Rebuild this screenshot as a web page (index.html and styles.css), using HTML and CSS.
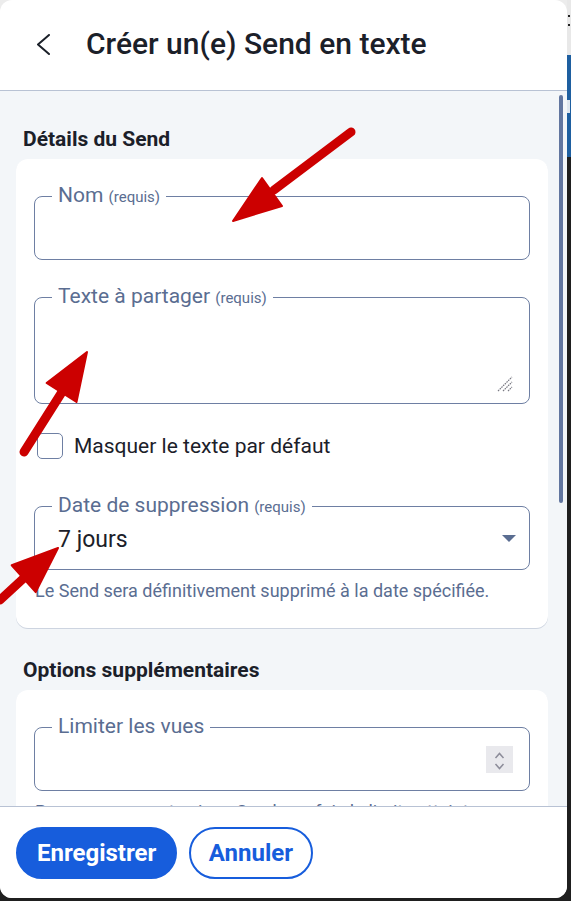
FILE: index.html
```html
<!DOCTYPE html>
<html lang="fr">
<head>
<meta charset="utf-8">
<title>Créer un(e) Send en texte</title>
<link rel="stylesheet" href="styles.css">
</head>
<body>
<div class="desktop">
  <div class="window">
    <header class="topbar">
      <svg class="back" viewBox="0 0 14 22" aria-hidden="true"><polyline points="13,1 2,10.5 13,20"/></svg>
      <h1 class="title">Créer un(e) Send en texte</h1>
    </header>
    <main class="content">
      <h2 class="section-title">Détails du Send</h2>
      <section class="card">
        <div class="field field-nom">
          <span class="label">Nom <span class="req">(requis)</span></span>
        </div>
        <div class="field field-text">
          <span class="label">Texte à partager <span class="req">(requis)</span></span>
          <svg class="resize" viewBox="0 0 16 16" aria-hidden="true">
            <line x1="1" y1="15" x2="15" y2="1"/>
            <line x1="6" y1="15" x2="15" y2="6"/>
            <line x1="11" y1="15" x2="15" y2="11"/>
          </svg>
        </div>
        <label class="check-row"><span class="checkbox"></span><span>Masquer le texte par défaut</span></label>
        <div class="field field-select">
          <span class="label">Date de suppression <span class="req">(requis)</span></span>
          <span class="value">7 jours</span>
          <span class="caret"></span>
        </div>
        <p class="hint">Le Send sera définitivement supprimé à la date spécifiée.</p>
      </section>
      <h2 class="section-title">Options supplémentaires</h2>
      <section class="card">
        <div class="field field-number">
          <span class="label">Limiter les vues</span>
          <span class="spin">
            <svg viewBox="0 0 27 27" aria-hidden="true">
              <polyline points="9.5,12 13.5,7.5 17.5,12"/>
              <polyline points="9.5,18 13.5,22.5 17.5,18"/>
            </svg>
          </span>
        </div>
        <p class="hint">Personne ne peut voir ce Send une fois la limite atteinte.</p>
      </section>
      <div class="scrollbar"></div>
    </main>
    <footer class="actions">
      <button class="btn btn-primary">Enregistrer</button>
      <button class="btn btn-outline">Annuler</button>
    </footer>
  </div>
  <div class="strip">
    <div class="strip-top"><div class="dots"></div></div>
    <div class="strip-blue"><div class="mark"></div></div>
    <div class="strip-dark"></div>
  </div>
  <svg class="annotations" viewBox="0 0 571 901" aria-hidden="true">
    <g class="arrow">
      <line x1="351" y1="132" x2="274" y2="190"/>
      <polygon points="233,221 262,178 282,206"/>
    </g>
    <g class="arrow">
      <line x1="24" y1="452" x2="62" y2="392"/>
      <polygon points="87,352 46.6,383 76.5,402"/>
    </g>
    <g class="arrow">
      <line x1="0" y1="600" x2="25" y2="577"/>
      <polygon points="58,548 11.7,565.3 35.7,592.1"/>
    </g>
  </svg>
</div>
</body>
</html>
```
FILE: styles.css
```css
* { box-sizing: border-box; }

body {
  margin: 0;
  background: #1f1f1f;
  font-family: Roboto, "Noto Sans", "Liberation Sans", sans-serif;
}

.desktop {
  position: relative;
  width: 571px;
  height: 901px;
  display: flex;
  align-items: flex-start;
  overflow: hidden;
  background: linear-gradient(#ececec 0 60px, #1f1f1f 60px);
}

.window {
  flex: none;
  width: 567px;
  height: 898px;
  background: #fff;
  border-radius: 12px;
  display: flex;
  flex-direction: column;
  overflow: hidden;
}

.topbar {
  flex: none;
  height: 91px;
  display: flex;
  align-items: center;
  border-bottom: 1px solid #b8c2d4;
  padding-bottom: 3px;
}

.back {
  width: 14px;
  height: 22px;
  margin: 2px 36px 0;
  fill: none;
  stroke: #1b2029;
  stroke-width: 2;
  stroke-linecap: round;
  stroke-linejoin: round;
}

.title {
  margin: 0;
  font-size: 30px;
  font-weight: 500;
  line-height: 34px;
  color: #1b2029;
  white-space: nowrap;
}

.content {
  flex: 1;
  position: relative;
  overflow: hidden;
  background: #f3f6f9;
  padding: 36px 19px 0 16px;
}

.section-title {
  margin: 0 0 8px 7px;
  font-size: 21px;
  font-weight: 700;
  line-height: 24px;
  color: #1b2029;
}

.card {
  background: #fff;
  border-radius: 12px;
  padding: 37px 18px 27px 18px;
  box-shadow: 0 1px 0 #cdd4e0;
  margin-bottom: 30px;
}

.field {
  position: relative;
  height: 64px;
  border: 1.5px solid #6e7fa3;
  border-radius: 8px;
}

.label {
  position: absolute;
  top: -14px;
  left: 17px;
  padding: 0 6px;
  background: #fff;
  font-size: 21px;
  line-height: 24px;
  color: #5a6d91;
  white-space: nowrap;
}

.req { font-size: 15px; }

.field-nom { margin-bottom: 37px; }

.field-text {
  height: 107px;
  margin-bottom: 29px;
  display: flex;
  justify-content: flex-end;
  align-items: flex-end;
  padding: 0 16px 11px 0;
}

.resize {
  width: 16px;
  height: 16px;
  stroke: #7a7a84;
  stroke-width: 1.2;
  stroke-dasharray: 1.6 0.8;
}

.check-row {
  display: flex;
  align-items: center;
  gap: 11px;
  height: 26px;
  margin: 0 0 47px 3px;
  font-size: 21px;
  color: #1b2029;
}

.checkbox {
  flex: none;
  width: 26px;
  height: 26px;
  border: 1.5px solid #6e7fa3;
  border-radius: 5px;
  background: #fff;
}

.field-select {
  display: flex;
  align-items: center;
  justify-content: space-between;
  padding: 0 13px 0 23px;
}

.value {
  font-size: 23px;
  color: #1b2029;
  padding-top: 2px;
}

.caret {
  width: 0;
  height: 0;
  border-left: 7px solid transparent;
  border-right: 7px solid transparent;
  border-top: 7px solid #5a6d91;
}

.hint {
  margin: 11px 0 0 1px;
  font-size: 18px;
  line-height: 20px;
  color: #5a6d91;
  white-space: nowrap;
}

.field-number {
  display: flex;
  justify-content: flex-end;
  align-items: center;
  padding-right: 16px;
}

.spin {
  width: 27px;
  height: 27px;
  background: #e9e9ed;
  display: flex;
}

.spin svg {
  width: 27px;
  height: 27px;
  fill: none;
  stroke: #8c8c99;
  stroke-width: 1.5;
}

.scrollbar {
  position: absolute;
  top: 4px;
  right: 4px;
  width: 4px;
  height: 408px;
  border-radius: 2px;
  background: #6276a0;
}

.actions {
  flex: none;
  height: 92px;
  border-top: 1px solid #b8c2d4;
  background: #fff;
  display: flex;
  gap: 12px;
  padding: 20px 16px 0;
}

.btn {
  height: 52px;
  border-radius: 26px;
  border: 2px solid #175ddc;
  font-family: Roboto, "Noto Sans", sans-serif;
  font-size: 24px;
  font-weight: 700;
  line-height: 1;
}

.btn-primary {
  background: #175ddc;
  color: #fff;
  padding: 0 19px;
}

.btn-outline {
  background: #fff;
  color: #175ddc;
  padding: 0 17.5px;
}

.strip {
  flex: none;
  width: 4px;
  height: 901px;
  display: flex;
  flex-direction: column;
}

.strip-top {
  height: 55px;
  background: #e8e8e8;
  padding-top: 15px;
}

.dots {
  width: 2px;
  height: 2px;
  margin-left: 1px;
  background: #222;
  box-shadow: 0 9px 0 #222;
}

.strip-blue {
  height: 102px;
  background: #1e5fa0;
  padding-top: 45px;
}

.mark {
  width: 3px;
  height: 13px;
  background: #dfe6ee;
}

.strip-dark {
  flex: 1;
  background: #1f1f1f;
}

.annotations {
  position: absolute;
  left: 0;
  top: 0;
  width: 571px;
  height: 901px;
  pointer-events: none;
}

.arrow line {
  stroke: #cc0000;
  stroke-width: 9;
  stroke-linecap: round;
}

.arrow polygon {
  fill: #cc0000;
  stroke: #cc0000;
  stroke-width: 2;
  stroke-linejoin: round;
}
```
